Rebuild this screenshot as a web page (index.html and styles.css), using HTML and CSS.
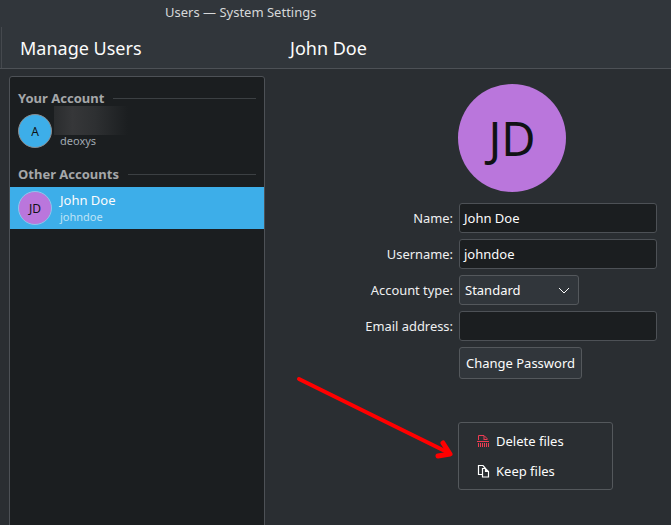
FILE: index.html
```html
<!DOCTYPE html>
<html lang="en">
<head>
<meta charset="utf-8">
<title>Users — System Settings</title>
<link rel="stylesheet" href="styles.css">
</head>
<body>
<div class="window">
  <div class="titlebar"><span class="title-text">Users — System Settings</span></div>
  <header class="toolbar">
    <div class="toolbar-left"><h1 class="heading">Manage Users</h1></div>
    <h2 class="heading">John Doe</h2>
  </header>
  <div class="content">
    <aside class="sidebar">
      <div class="list">
        <div class="section"><span>Your Account</span><i class="rule"></i></div>
        <div class="user user-self">
          <div class="avatar avatar-blue">A</div>
          <div class="user-text">
            <div class="blurred"></div>
            <div class="user-login">deoxys</div>
          </div>
        </div>
        <div class="section section-other"><span>Other Accounts</span><i class="rule"></i></div>
        <div class="user user-active">
          <div class="avatar avatar-purple">JD</div>
          <div class="user-text">
            <div class="user-name">John Doe</div>
            <div class="user-login">johndoe</div>
          </div>
        </div>
      </div>
    </aside>
    <main class="detail">
      <div class="big-avatar">JD</div>
      <form class="form">
        <label class="form-label">Name:</label>
        <div class="field">John Doe</div>
        <label class="form-label">Username:</label>
        <div class="field">johndoe</div>
        <label class="form-label">Account type:</label>
        <div class="combo"><span>Standard</span>
          <svg class="chevron" width="12" height="7" viewBox="0 0 12 7"><path d="M1 1l5 5 5-5" fill="none" stroke="#fcfcfc" stroke-width="1"/></svg>
        </div>
        <label class="form-label">Email address:</label>
        <div class="field"></div>
        <span></span>
        <div class="button">Change Password</div>
      </form>
    </main>
  </div>
  <div class="menu">
    <div class="menu-item">
      <svg class="menu-icon" width="16" height="16" viewBox="0 0 16 16"><path d="M3.500 7V2.500h5.500l3 3V7" fill="none" stroke="#ed3b52" stroke-width="1"/><path d="M3.500 2h5.500v4H3.500z" fill="none"/><path d="M8.500 3h1v3h2.500v1h-3.500z" fill="#ed3b52"/><path d="M2 8.500h12" stroke="#ed3b52" stroke-width="1"/><path d="M3.500 10v4M5.500 10v4M7.500 10v4M9.500 10v4M11.500 10v4M13.500 10v4" stroke="#ed3b52" stroke-width="1"/></svg>
      <span>Delete files</span>
    </div>
    <div class="menu-item">
      <svg class="menu-icon" width="16" height="16" viewBox="0 0 16 16"><path d="M7 11.500H3.500V2.500H8l2.500 3" fill="none" stroke="#ffffff" stroke-width="1.200"/><path d="M7.500 5.500h3l3 3V14h-6zM10.500 5.500v3h3" fill="#2a2e32" stroke="#ffffff" stroke-width="1.200"/></svg>
      <span>Keep files</span>
    </div>
  </div>
  <svg class="arrow" width="170" height="90" viewBox="0 0 170 90"><path d="M9 9L159 83" fill="none" stroke="#ff0000" stroke-width="4" stroke-linecap="round"/><path d="M153 73L160 84L148 86" fill="none" stroke="#ff0000" stroke-width="5" stroke-linecap="round" stroke-linejoin="round"/></svg>
</div>
</body>
</html>
```
FILE: styles.css
```css
* { box-sizing: border-box; }
html, body { margin: 0; padding: 0; height: 100%; overflow: hidden; }
body { background: #2a2e32; color: #fcfcfc; font-family: "Noto Sans", sans-serif; font-size: 13px; }
.window { position: relative; width: 671px; height: 525px; overflow: hidden; }
.titlebar { height: 27px; background: #31363b; padding-left: 165px; line-height: 25px; color: #d6d8d9; font-size: 13px; }
.toolbar { height: 42px; background: #31363b; border-bottom: 1px solid #4d5156; display: flex; align-items: center; }
.toolbar-left { width: 289px; height: 41px; border-left: 1px solid #45494e; margin-left: 1px; padding-left: 18px; display: flex; align-items: center; }
.heading { margin: 0; font-size: 18px; font-weight: 400; line-height: 24px; color: #fcfcfc; }
.content { display: flex; height: 456px; }
.sidebar { width: 275px; padding: 7px 0 0 9px; flex: none; }
.list { width: 256px; height: 460px; background: #1b1e20; border: 1px solid #4d5156; border-radius: 3px; padding-top: 12px; }
.section { display: flex; align-items: center; gap: 9px; height: 18px; padding: 0 8px; font-weight: 700; font-size: 13px; color: #a5a7a9; }
.section-other { margin-top: 12px; margin-bottom: 4px; }
.rule { flex: 1; height: 1px; background: #3c4043; }
.user { display: flex; align-items: center; height: 42px; padding-left: 8px; gap: 8px; }
.user-self { height: 46px; align-items: flex-end; padding-bottom: 5px; }
.avatar { width: 34px; height: 34px; border-radius: 50%; border: 1px solid #8a8d90; color: #101214; display: flex; align-items: center; justify-content: center; font-size: 12px; flex: none; }
.avatar-blue { background: #3daee9; }
.avatar-purple { background: #ba76dc; border-color: #8cc6ec; }
.user-active { background: #3daee9; }
.user-text { display: flex; flex-direction: column; }
.user-active .user-text { margin-top: -2px; }
.user-name { font-size: 13px; line-height: 18px; color: #fcfcfc; }
.user-login { font-size: 11px; line-height: 15px; color: #a1a9b1; }
.user-active .user-login { color: #bfe3f6; }
.blurred { width: 74px; height: 29px; margin: 0 0 -2px -6px; background: linear-gradient(90deg, #2a2c2e, #363739 25%, #2e3032 55%, #1b1e20); }
.detail { flex: 1; padding-top: 15px; display: flex; flex-direction: column; }
.big-avatar { width: 108px; height: 108px; margin-left: 183px; border-radius: 50%; background: #ba76dc; color: #101214; font-size: 47px; display: flex; align-items: center; justify-content: center; }
.form { display: grid; grid-template-columns: 178px 198px; column-gap: 6px; row-gap: 6px; margin-top: 11px; align-items: center; }
.form-label { text-align: right; color: #eff0f1; line-height: 30px; font-size: 12.9px; }
.field { height: 30px; background: #1b1e20; border: 1px solid #4d5156; border-radius: 3px; padding: 0 4px; line-height: 28px; }
.combo { height: 30px; width: 120px; background: #31363b; border: 1px solid #54585c; border-radius: 3px; padding: 0 5px; display: flex; align-items: center; justify-content: space-between; }
.chevron { flex: none; margin-right: 3px; }
.button { height: 32px; width: 123px; background: #31363b; border: 1px solid #54585c; border-radius: 3px; display: flex; align-items: center; justify-content: center; white-space: nowrap; }
.menu { position: absolute; left: 458px; top: 422px; width: 155px; height: 68px; background: #2a2e32; border: 1px solid #54585c; border-radius: 3px; padding: 3px 0; }
.menu-item { display: flex; align-items: center; height: 30px; padding-left: 16px; gap: 5px; }
.menu-icon { flex: none; }
.arrow { position: absolute; left: 290px; top: 370px; }
```
